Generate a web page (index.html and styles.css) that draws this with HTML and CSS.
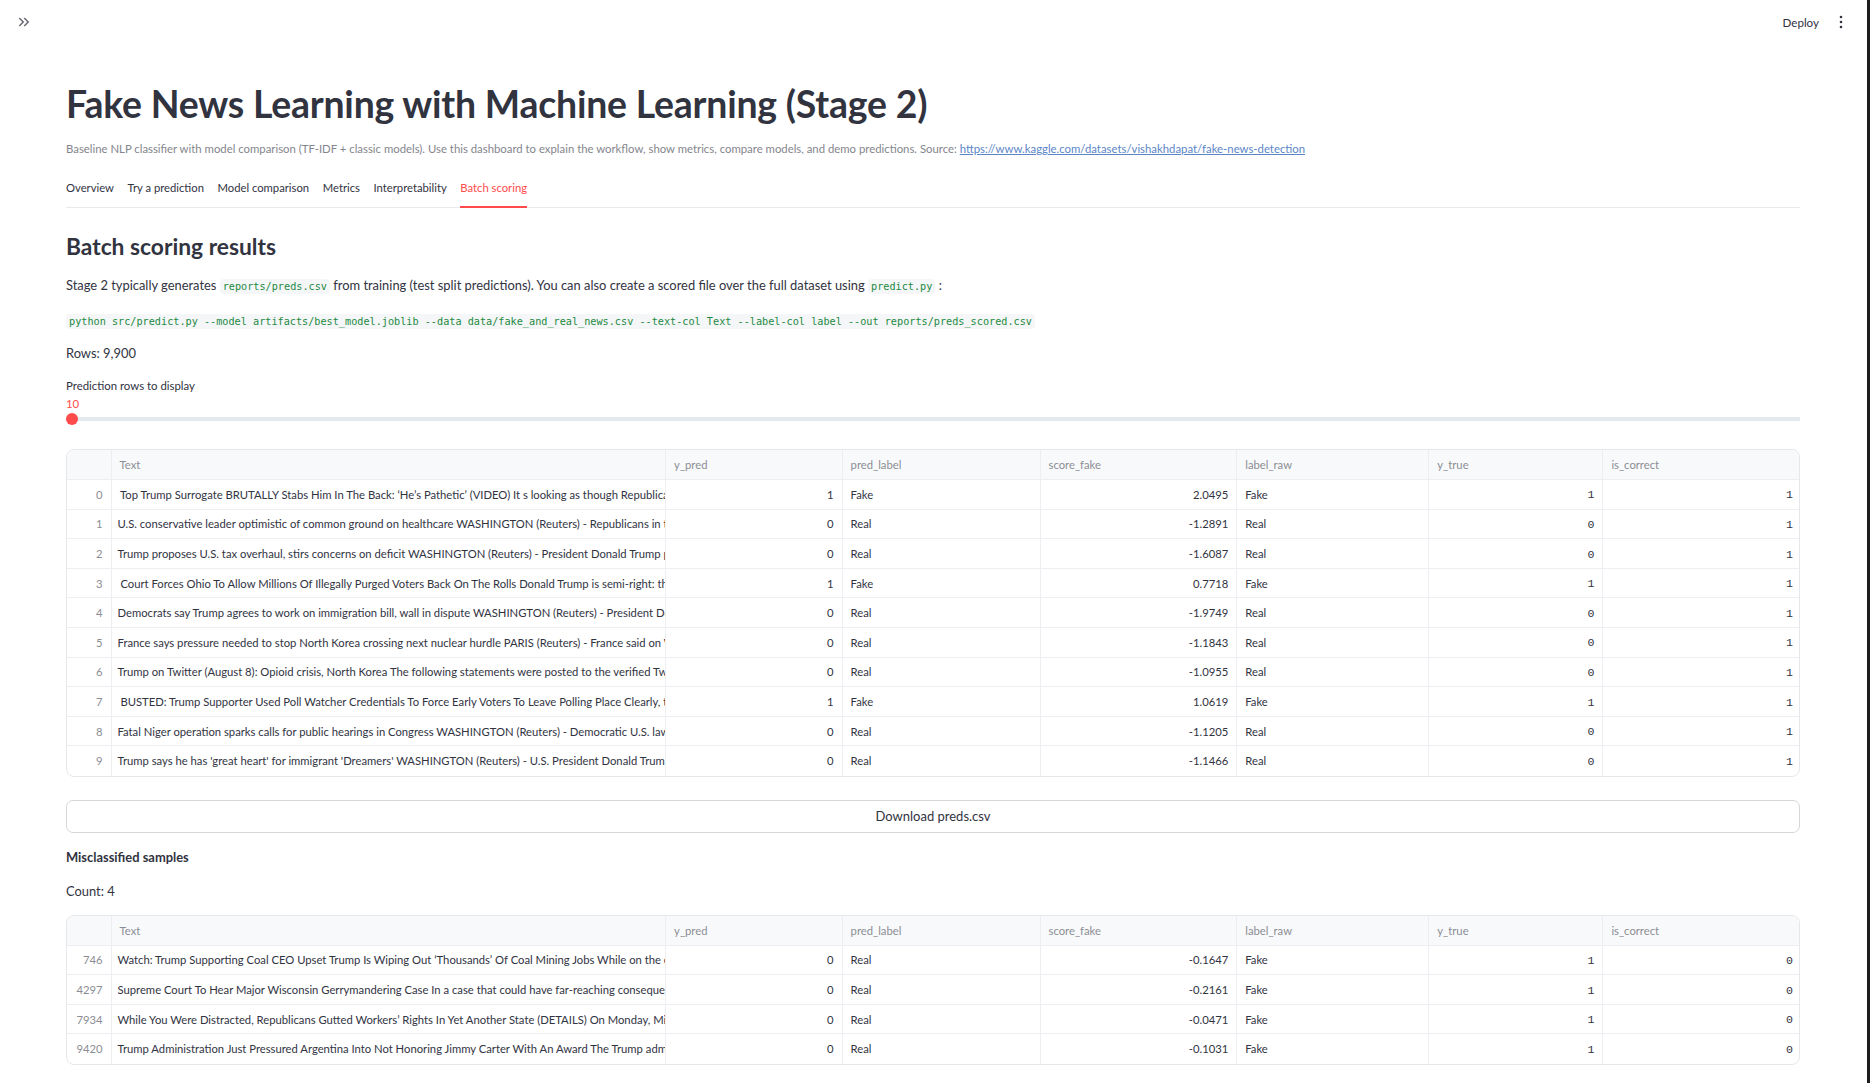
FILE: index.html
```html
<!DOCTYPE html>
<html lang="en">
<head>
<meta charset="utf-8">
<title>Fake News Learning with Machine Learning (Stage 2)</title>
<link rel="stylesheet" href="styles.css">
</head>
<body>
<div class="edge"></div>
<header class="topbar">
  <button class="sidebar-toggle" aria-label="Expand sidebar">
    <svg viewBox="0 0 24 24" width="18" height="18"><path d="M6.41 6 5 7.41 9.58 12 5 16.59 6.41 18l6-6z M13 6l-1.41 1.41L16.17 12l-4.58 4.59L13 18l6-6z" fill="#6b6d76"/></svg>
  </button>
  <div class="top-actions">
    <span class="deploy">Deploy</span>
    <svg class="kebab" viewBox="0 0 4 14" width="4" height="14"><circle cx="2" cy="2" r="1.3"/><circle cx="2" cy="7" r="1.3"/><circle cx="2" cy="12" r="1.3"/></svg>
  </div>
</header>

<main class="main">
  <h1 class="title">Fake News Learning with Machine Learning (Stage 2)</h1>
  <p class="caption">Baseline NLP classifier with model comparison (TF-IDF + classic models). Use this dashboard to explain the workflow, show metrics, compare models, and demo predictions. Source: <a href="#">https://www.kaggle.com/datasets/vishakhdapat/fake-news-detection</a></p>

  <nav class="tabs">
    <span class="tab">Overview</span>
    <span class="tab">Try a prediction</span>
    <span class="tab">Model comparison</span>
    <span class="tab">Metrics</span>
    <span class="tab">Interpretability</span>
    <span class="tab active">Batch scoring</span>
  </nav>

  <h3 class="section-title">Batch scoring results</h3>
  <p class="text">Stage 2 typically generates <code>reports/preds.csv</code> from training (test split predictions). You can also create a scored file over the full dataset using <code>predict.py</code> :</p>
  <p class="text cmd"><code>python src/predict.py --model artifacts/best_model.joblib --data data/fake_and_real_news.csv --text-col Text --label-col label --out reports/preds_scored.csv</code></p>
  <p class="text rows">Rows: 9,900</p>

  <div class="slider">
    <div class="slider-label">Prediction rows to display</div>
    <div class="slider-value">10</div>
    <div class="track"><span class="thumb"></span></div>
  </div>

  <div class="grid-wrap first">
    <table class="grid">
      <colgroup><col class="c-idx"><col class="c-text"><col class="c-ypred"><col class="c-plabel"><col class="c-score"><col class="c-lraw"><col class="c-ytrue"><col class="c-corr"></colgroup>
      <thead><tr><th></th><th>Text</th><th>y_pred</th><th>pred_label</th><th>score_fake</th><th>label_raw</th><th>y_true</th><th>is_correct</th></tr></thead>
      <tbody>
        <tr><td class="idx">0</td><td class="txt">&nbsp;Top Trump Surrogate BRUTALLY Stabs Him In The Back: ‘He’s Pathetic’ (VIDEO) It s looking as though Republicans are going to have a serious problem</td><td class="num">1</td><td>Fake</td><td class="num">2.0495</td><td>Fake</td><td class="num mono">1</td><td class="num mono">1</td></tr>
        <tr><td class="idx">1</td><td class="txt">U.S. conservative leader optimistic of common ground on healthcare WASHINGTON (Reuters) - Republicans in the U.S. Senate</td><td class="num">0</td><td>Real</td><td class="num">-1.2891</td><td>Real</td><td class="num mono">0</td><td class="num mono">1</td></tr>
        <tr><td class="idx">2</td><td class="txt">Trump proposes U.S. tax overhaul, stirs concerns on deficit WASHINGTON (Reuters) - President Donald Trump proposed on Wednesday</td><td class="num">0</td><td>Real</td><td class="num">-1.6087</td><td>Real</td><td class="num mono">0</td><td class="num mono">1</td></tr>
        <tr><td class="idx">3</td><td class="txt">&nbsp;Court Forces Ohio To Allow Millions Of Illegally Purged Voters Back On The Rolls Donald Trump is semi-right: the system</td><td class="num">1</td><td>Fake</td><td class="num">0.7718</td><td>Fake</td><td class="num mono">1</td><td class="num mono">1</td></tr>
        <tr><td class="idx">4</td><td class="txt">Democrats say Trump agrees to work on immigration bill, wall in dispute WASHINGTON (Reuters) - President Donald Trump</td><td class="num">0</td><td>Real</td><td class="num">-1.9749</td><td>Real</td><td class="num mono">0</td><td class="num mono">1</td></tr>
        <tr><td class="idx">5</td><td class="txt">France says pressure needed to stop North Korea crossing next nuclear hurdle PARIS (Reuters) - France said on Wednesday</td><td class="num">0</td><td>Real</td><td class="num">-1.1843</td><td>Real</td><td class="num mono">0</td><td class="num mono">1</td></tr>
        <tr><td class="idx">6</td><td class="txt">Trump on Twitter (August 8): Opioid crisis, North Korea The following statements were posted to the verified Twitter accounts</td><td class="num">0</td><td>Real</td><td class="num">-1.0955</td><td>Real</td><td class="num mono">0</td><td class="num mono">1</td></tr>
        <tr><td class="idx">7</td><td class="txt">&nbsp;BUSTED: Trump Supporter Used Poll Watcher Credentials To Force Early Voters To Leave Polling Place Clearly, this is</td><td class="num">1</td><td>Fake</td><td class="num">1.0619</td><td>Fake</td><td class="num mono">1</td><td class="num mono">1</td></tr>
        <tr><td class="idx">8</td><td class="txt">Fatal Niger operation sparks calls for public hearings in Congress WASHINGTON (Reuters) - Democratic U.S. lawmakers on</td><td class="num">0</td><td>Real</td><td class="num">-1.1205</td><td>Real</td><td class="num mono">0</td><td class="num mono">1</td></tr>
        <tr><td class="idx">9</td><td class="txt">Trump says he has 'great heart' for immigrant 'Dreamers' WASHINGTON (Reuters) - U.S. President Donald Trump said on</td><td class="num">0</td><td>Real</td><td class="num">-1.1466</td><td>Real</td><td class="num mono">0</td><td class="num mono">1</td></tr>
      </tbody>
    </table>
  </div>

  <button class="download">Download preds.csv</button>

  <p class="text strong">Misclassified samples</p>
  <p class="text count">Count: 4</p>

  <div class="grid-wrap second">
    <table class="grid">
      <colgroup><col class="c-idx"><col class="c-text"><col class="c-ypred"><col class="c-plabel"><col class="c-score"><col class="c-lraw"><col class="c-ytrue"><col class="c-corr"></colgroup>
      <thead><tr><th></th><th>Text</th><th>y_pred</th><th>pred_label</th><th>score_fake</th><th>label_raw</th><th>y_true</th><th>is_correct</th></tr></thead>
      <tbody>
        <tr><td class="idx">746</td><td class="txt">Watch: Trump Supporting Coal CEO Upset Trump Is Wiping Out ‘Thousands’ Of Coal Mining Jobs While on the campaign trail</td><td class="num">0</td><td>Real</td><td class="num">-0.1647</td><td>Fake</td><td class="num mono">1</td><td class="num mono">0</td></tr>
        <tr><td class="idx">4297</td><td class="txt">Supreme Court To Hear Major Wisconsin Gerrymandering Case In a case that could have far-reaching consequences for</td><td class="num">0</td><td>Real</td><td class="num">-0.2161</td><td>Fake</td><td class="num mono">1</td><td class="num mono">0</td></tr>
        <tr><td class="idx">7934</td><td class="txt">While You Were Distracted, Republicans Gutted Workers’ Rights In Yet Another State (DETAILS) On Monday, Missouri</td><td class="num">0</td><td>Real</td><td class="num">-0.0471</td><td>Fake</td><td class="num mono">1</td><td class="num mono">0</td></tr>
        <tr><td class="idx">9420</td><td class="txt">Trump Administration Just Pressured Argentina Into Not Honoring Jimmy Carter With An Award The Trump administration</td><td class="num">0</td><td>Real</td><td class="num">-0.1031</td><td>Fake</td><td class="num mono">1</td><td class="num mono">0</td></tr>
      </tbody>
    </table>
  </div>
</main>
</body>
</html>
```

FILE: styles.css
```css
* { box-sizing: border-box; }

html, body {
  margin: 0;
  padding: 0;
  background: #ffffff;
}

body {
  width: 1870px;
  height: 1083px;
  overflow: hidden;
  font-family: Lato, "Noto Sans", sans-serif;
  color: #31333f;
}

/* thin dark window edge on the right */
.edge {
  position: fixed;
  top: 0;
  right: 0;
  width: 3px;
  height: 100%;
  background: #1c1c1e;
}

/* ---------- top bar ---------- */
.topbar {
  height: 44px;
  display: flex;
  align-items: center;
  justify-content: space-between;
  padding: 0 27px 0 15px;
}

.sidebar-toggle {
  border: 0;
  background: none;
  padding: 0;
  width: 18px;
  height: 18px;
  display: flex;
}

.top-actions {
  display: flex;
  align-items: center;
  gap: 20px;
}

.deploy {
  font-size: 11.6px;
  color: #31333f;
}

.kebab { fill: #31333f; }

/* ---------- main column ---------- */
.main {
  padding: 0 70px 0 66px;
}

.title {
  margin: 0;
  padding-top: 37px;
  font-size: 37.4px;
  line-height: 45px;
  font-weight: 700;
  letter-spacing: -0.2px;
  color: #31333f;
}

.caption {
  margin: 14px 0 0;
  font-size: 11.35px;
  line-height: 18px;
  color: #84868d;
}

.caption a {
  color: #5a86c8;
  text-decoration: underline;
}

/* ---------- tabs ---------- */
.tabs {
  margin-top: 21px;
  display: flex;
  gap: 13.6px;
  border-bottom: 1px solid #e8e9ec;
}

.tab {
  font-size: 11.25px;
  line-height: 18px;
  padding-bottom: 9px;
  border-bottom: 2px solid transparent;
  margin-bottom: -1px;
  color: #31333f;
}

.tab.active {
  color: #ff4b4b;
  border-bottom-color: #ff4b4b;
}

/* ---------- text blocks ---------- */
.section-title {
  margin: 23px 0 0;
  font-size: 22.8px;
  line-height: 30px;
  font-weight: 700;
  color: #31333f;
}

.text {
  margin: 14px 0 0;
  font-size: 12.9px;
  line-height: 20px;
}

.text code {
  font-family: "DejaVu Sans Mono", "Liberation Mono", monospace;
  font-size: 10.2px;
  color: #1d8a3f;
  background: #f5f6f8;
  padding: 2px 3px;
  border-radius: 4px;
}

.cmd { margin-top: 13px; }
.rows { margin-top: 11px; }

.strong { font-weight: 700; margin-top: 14px; }
.count { margin-top: 14px; }

/* ---------- slider ---------- */
.slider { margin-top: 15px; }

.slider-label {
  font-size: 11.4px;
  line-height: 16px;
}

.slider-value {
  margin-top: 3px;
  font-size: 11.4px;
  line-height: 14px;
  color: #ff4b4b;
}

.track {
  margin-top: 2px;
  height: 12px;
  display: flex;
  align-items: center;
  background: linear-gradient(#e4e8ef, #e4e8ef) center / 100% 4px no-repeat;
  border-radius: 2px;
}

.thumb {
  width: 12px;
  height: 12px;
  border-radius: 50%;
  background: #ff4b4b;
}

/* ---------- data grids ---------- */
.grid-wrap {
  border: 1px solid #e6e7ea;
  border-radius: 8px;
  overflow: hidden;
}

.grid-wrap.first { margin-top: 24px; }
.grid-wrap.second { margin-top: 14px; }

.grid {
  width: 100%;
  border-collapse: collapse;
  table-layout: fixed;
  font-size: 11.25px;
}

.c-idx { width: 44px; }
.c-text { width: 554.6px; }
.c-ypred { width: 176.5px; }
.c-plabel { width: 198px; }
.c-score { width: 196.7px; }
.c-lraw { width: 192px; }
.c-ytrue { width: 174.1px; }
.c-corr { width: 198px; }

.grid th,
.grid td {
  height: 29.6px;
  padding: 0 8px;
  white-space: nowrap;
  overflow: hidden;
  text-align: left;
  border-left: 1px solid #eceef1;
  border-top: 1px solid #eceef1;
}

.grid tr > :first-child { border-left: 0; }
.grid thead th { border-top: 0; }

.grid th {
  font-weight: 400;
  color: #8b8d94;
  background: #f8f9fb;
}

.grid td { color: #31333f; }

.grid td.txt { padding-left: 6px; padding-right: 0; text-overflow: clip; }

.grid td.idx {
  text-align: right;
  color: #8b8d94;
  padding-right: 8px;
}

.grid td.num { text-align: right; }

.grid td.mono {
  font-family: "Liberation Mono", "DejaVu Sans Mono", monospace;
  font-size: 11.6px;
  padding-top: 1px;
}

/* ---------- button ---------- */
.download {
  display: flex;
  align-items: center;
  justify-content: center;
  width: 100%;
  height: 33px;
  margin-top: 23px;
  border: 1px solid #d6d7db;
  border-radius: 7px;
  background: #ffffff;
  font-family: Lato, "Noto Sans", sans-serif;
  font-size: 13px;
  color: #31333f;
}
```
